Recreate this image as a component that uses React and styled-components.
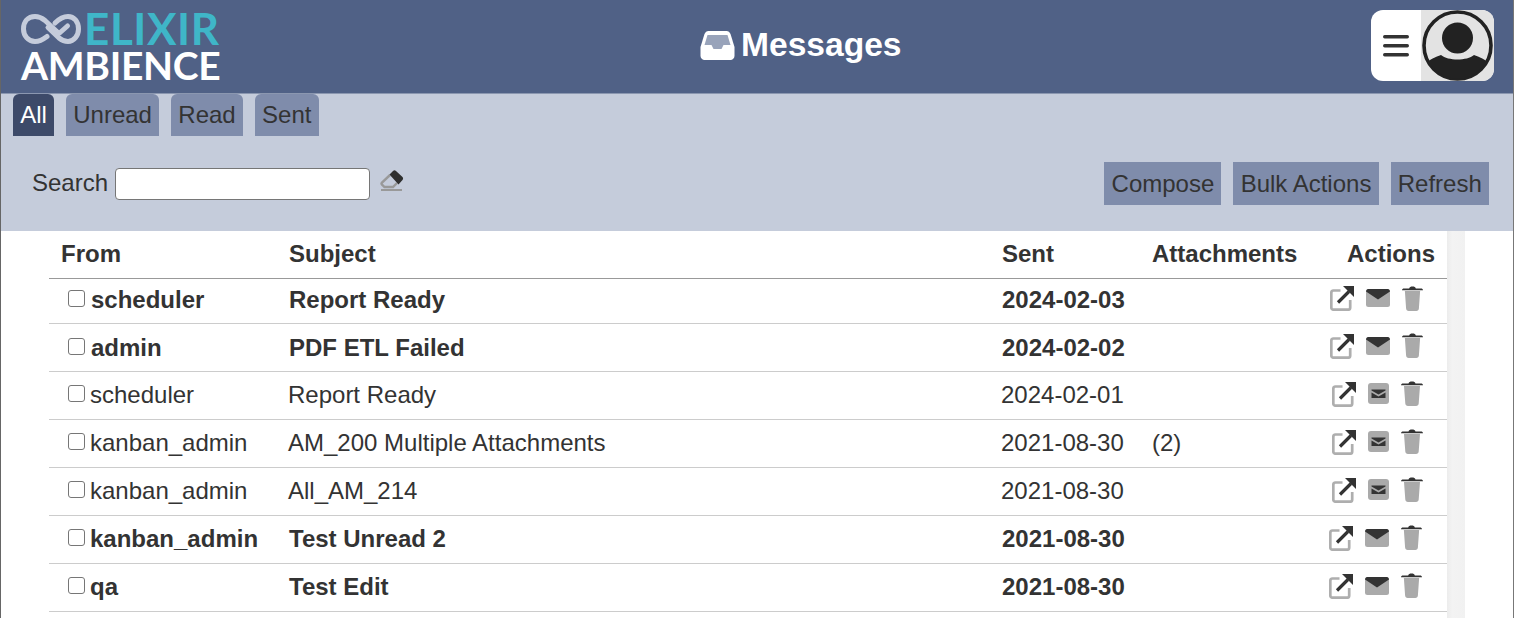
import React from "react";
import styled, { createGlobalStyle } from "styled-components";

const Global = createGlobalStyle`
  html, body { margin: 0; padding: 0; height: 618px; overflow: hidden; background: #fff; }
  body { font-family: "Liberation Sans", Arial, sans-serif; color: #333; font-size: 24px; }
`;
const Page = styled.div`
  width: 1514px; height: 618px; box-sizing: border-box; overflow: hidden;
  border-left: 1px solid #666; border-right: 1px solid #777; background: #fff;
`;
const Header = styled.header`
  height: 93px; margin-left: -1px; background: #506186; display: grid;
  grid-template-columns: 700px auto 1fr; align-items: center; border-bottom: 1px solid #8b97b0; box-sizing: content-box;
`;
const Logo = styled.div`
  align-self: start; padding: 12px 0 0 21px; display: flex; flex-direction: column; font-family: Lato, sans-serif; font-weight: 700;
`;
const LogoTop = styled.div`display: flex; align-items: center; height: 33px;`;
const LogoElixir = styled.span`color: #3fb6c8; font-size: 44px; line-height: 33px; letter-spacing: 0.6px; margin-left: 3px;`;
const LogoAmbience = styled.span`color: #fff; font-size: 39px; line-height: 36px; letter-spacing: -0.3px; margin-top: 2px;`;
const Title = styled.h1`
  margin: -3px 0 0; display: flex; align-items: center; gap: 6px; color: #fff; font-size: 33.6px; font-weight: 700; white-space: nowrap;
`;
const UserWrap = styled.div`display: flex; justify-content: flex-end; padding-right: 19px;`;
const UserBox = styled.div`
  width: 123px; height: 71px; border-radius: 12px; overflow: hidden; display: flex; background: #fff; margin-top: -2px;
`;
const Burger = styled.div`width: 50px; display: flex; align-items: center; justify-content: center;`;
const Avatar = styled.div`flex: 1; background: #e3e3e3; display: flex; align-items: center; justify-content: center;`;

const Toolbar = styled.section`background: #c5ccdb; height: 137px; display: flex; flex-direction: column;`;
const Tabs = styled.nav`display: flex; gap: 12px; padding-left: 12px;`;
const Tab = styled.div`
  height: 42px; line-height: 42px; padding: 0 7.2px; border-radius: 6px 6px 0 0;
  background: ${p => (p.$active ? "#3d4a69" : "#7f8cab")}; color: ${p => (p.$active ? "#fff" : "#333")};
`;
const ToolRow = styled.div`display: flex; justify-content: space-between; padding: 26px 24px 0 31px;`;
const SearchBox = styled.div`display: flex; align-items: flex-start; padding-top: 6px;`;
const SearchLabel = styled.label`line-height: 30px; margin-right: 7px;`;
const SearchInput = styled.input`
  width: 255px; height: 32px; box-sizing: border-box; border: 1px solid #767676; border-radius: 4px; background: #fff; padding: 0;
`;
const Eraser = styled.span`margin-left: 10px; margin-top: 1px; display: block;`;
const Buttons = styled.div`display: flex; gap: 12px;`;
const Button = styled.div`height: 43px; line-height: 43px; padding: 0 7.2px; background: #7f8cab; color: #333;`;

const Main = styled.main`display: flex; padding-left: 48px;`;
const TableWrap = styled.div`width: 1398px;`;
const Track = styled.div`width: 18px; height: 400px; background: linear-gradient(90deg, #ececec, #f3f3f3 30%, #f1f1f1);`;
const Cols = "228px 713px 150px 1fr";
const HeadRow = styled.div`
  display: grid; grid-template-columns: ${Cols}; height: 48px; line-height: 46px; font-weight: 700; border-bottom: 1px solid #999; padding-left: 12px; box-sizing: border-box;
`;
const HeadActions = styled.div`display: flex; justify-content: space-between; padding-right: 12px;`;
const Row = styled.div`
  display: grid; grid-template-columns: ${Cols}; height: ${p => (p.$first ? 45 : 48)}px; box-sizing: border-box; border-bottom: 1px solid #ccc; align-items: center;
  padding-left: ${p => (p.$unread ? 12 : 11)}px; padding-bottom: ${p => p.$pb}px; font-weight: ${p => (p.$unread ? 700 : 400)};
`;
const FromCell = styled.div`display: flex; align-items: center;`;
const Check = styled.span`
  width: 17px; height: 17px; box-sizing: border-box; border: 1px solid #767676; border-radius: 3px; background: #fff;
  margin: ${p => p.$mt}px ${p => p.$gap}px 0 ${p => (p.$unread ? 7 : 8)}px; display: block;
`;
const Attach = styled.div`display: flex; justify-content: space-between; padding: 0 12px 0 1px;`;
const Actions = styled.div`display: flex; align-items: center; gap: 12px; margin-top: ${p => p.$mt}px; padding-right: ${p => p.$pr}px;`;

const LogoMark = () => (
  <svg width="60" height="32" viewBox="0 0 60 31" fill="none" stroke="#c5ccdb" strokeWidth="5" strokeLinecap="round" strokeLinejoin="round">
    <path d="M26 23 C22 26 19 28 14 28 C7 28 2.5 22 2.5 15.5 C2.5 8 7 3 14 3 C18 3 21 4.5 24 7 L38 20 L46.5 12.5" />
    <path d="M27 14 L38 24.5 C41 27 44 28 47 28 C53 28 57.5 22 57.5 15.5 C57.5 8 53 3 47 3 C42 3 38 5.5 34 9.5" />
  </svg>
);
const Inbox = () => (
  <svg width="35" height="30" viewBox="0 0 34 30">
    <path d="M8 1 H26 C28 1 29 2 30 4 L34 17 V26 C34 28 32 30 30 30 H4 C2 30 0 28 0 26 V17 L4 4 C5 2 6 1 8 1 Z" fill="#fff" />
    <path d="M7 5 H27 L30 15 H23 L21 19 H13 L11 15 H4 Z" fill="#98a3ba" />
  </svg>
);
const BurgerIcon = () => (
  <svg width="26" height="24" viewBox="0 0 26 24" fill="#333">
    <rect y="1" width="26" height="3.4" rx="1.7" /><rect y="10" width="26" height="3.4" rx="1.7" /><rect y="19" width="26" height="3.4" rx="1.7" />
  </svg>
);
const AvatarIcon = () => (
  <svg width="73" height="71" viewBox="0 0 73 71">
    <defs><clipPath id="av"><circle cx="36.5" cy="35.5" r="33" /></clipPath></defs>
    <circle cx="36.5" cy="35.5" r="33.5" fill="none" stroke="#222" strokeWidth="3.6" />
    <circle cx="36.5" cy="28" r="15.5" fill="#222" />
    <path d="M0 71 V60 C6 50 14 47 20 45 C27 51 46 51 53 45 C59 47 67 50 73 60 V71 Z" fill="#222" clipPath="url(#av)" />
  </svg>
);
const EraserIcon = () => (
  <svg width="24" height="23" viewBox="0 0 24 23">
    <path d="M10 6 L2 13.5 C1.4 14.2 1.4 15 2 15.6 L4.5 18 H13 L17 14" fill="none" stroke="#999" strokeWidth="2.4" />
    <path d="M9.5 5.5 L13 2 C14 1 15 1 16 2 L22.5 8 C23.3 9 23.3 10 22.5 11 L18.5 15.5 Z" fill="#2f2f2f" />
    <rect x="1" y="20" width="21" height="2" fill="#999" />
  </svg>
);
const ExtIcon = () => (
  <svg width="24" height="26" viewBox="0 0 24 26" fill="none">
    <path d="M10.5 5.5 H3.5 C2 5.5 1.3 6.5 1.3 8 V22.5 C1.3 24 2 24.7 3.5 24.7 H18 C19.5 24.7 20.2 24 20.2 22.5 V15" stroke="#aeaeae" strokeWidth="2.7" />
    <path d="M8 17.5 L19 6.5" stroke="#333" strokeWidth="3.2" />
    <path d="M13 1 H24 V12 Z" fill="#333" />
  </svg>
);
const EnvClosed = () => (
  <svg width="24" height="18" viewBox="0 0 24 18">
    <rect x="0" y="1" width="24" height="17" rx="2.5" fill="#aaa" />
    <path d="M2 0 H22 C23 0 24 1 24 2.5 L12 10.5 L0 2.5 C0 1 1 0 2 0 Z" fill="#333" />
  </svg>
);
const EnvOpen = () => (
  <svg width="21" height="21" viewBox="0 0 21 21">
    <rect width="21" height="21" rx="3" fill="#aaa" />
    <path d="M3.5 6.5 H17.5 V7.5 L10.5 11.5 L3.5 7.5 Z" fill="#333" />
    <path d="M3.5 9.5 L10.5 13.5 L17.5 9.5 V15 H3.5 Z" fill="#333" />
  </svg>
);
const Trash = ({ w }) => (
  <svg width={w} height="25" viewBox="0 0 22 25" preserveAspectRatio="none">
    <path d="M3 5 H19 L17.7 22.5 C17.6 24 16.6 25 15 25 H7 C5.4 25 4.4 24 4.3 22.5 Z" fill="#aaa" />
    <path d="M0 4.2 C0 3 1 2.5 2 2.5 H7.5 C8 1 9 0.5 11 0.5 C13 0.5 14 1 14.5 2.5 H20 C21 2.5 22 3 22 4.2 Z" fill="#333" />
  </svg>
);

const rows = [
  { from: "scheduler", subject: "Report Ready", sent: "2024-02-03", unread: true, first: true, pr: 12, gap: 6, pb: 2, checkMt: -4, actMt: -4 },
  { from: "admin", subject: "PDF ETL Failed", sent: "2024-02-02", unread: true, pr: 12, gap: 6, pb: 0, checkMt: -2, actMt: -4 },
  { from: "scheduler", subject: "Report Ready", sent: "2024-02-01", pr: 12, gap: 5, pb: 2, checkMt: -2, actMt: -2 },
  { from: "kanban_admin", subject: "AM_200 Multiple Attachments", sent: "2021-08-30", att: "(2)", pr: 12, gap: 5, pb: 2, checkMt: -2, actMt: -2 },
  { from: "kanban_admin", subject: "All_AM_214", sent: "2021-08-30", pr: 12, gap: 5, pb: 2, checkMt: -2, actMt: -2 },
  { from: "kanban_admin", subject: "Test Unread 2", sent: "2021-08-30", unread: true, pr: 13, gap: 5, pb: 2, checkMt: -2, actMt: -2 },
  { from: "qa", subject: "Test Edit", sent: "2021-08-30", unread: true, pr: 13, gap: 5, pb: 2, checkMt: -2, actMt: -2 },
];

export default function App() {
  return (
    <Page>
      <Global />
      <Header>
        <Logo>
          <LogoTop><LogoMark /><LogoElixir>ELIXIR</LogoElixir></LogoTop>
          <LogoAmbience>AMBIENCE</LogoAmbience>
        </Logo>
        <Title><Inbox />Messages</Title>
        <UserWrap>
          <UserBox>
            <Burger><BurgerIcon /></Burger>
            <Avatar><AvatarIcon /></Avatar>
          </UserBox>
        </UserWrap>
      </Header>
      <Toolbar>
        <Tabs>
          <Tab $active>All</Tab><Tab>Unread</Tab><Tab>Read</Tab><Tab>Sent</Tab>
        </Tabs>
        <ToolRow>
          <SearchBox>
            <SearchLabel>Search</SearchLabel>
            <SearchInput />
            <Eraser><EraserIcon /></Eraser>
          </SearchBox>
          <Buttons>
            <Button>Compose</Button><Button>Bulk Actions</Button><Button>Refresh</Button>
          </Buttons>
        </ToolRow>
      </Toolbar>
      <Main>
        <TableWrap>
          <HeadRow>
            <div>From</div><div>Subject</div><div>Sent</div>
            <HeadActions><span>Attachments</span><span>Actions</span></HeadActions>
          </HeadRow>
          {rows.map((r, i) => (
            <Row key={i} $unread={r.unread} $first={r.first} $pb={r.pb}>
              <FromCell><Check $unread={r.unread} $gap={r.gap} $mt={r.checkMt} />{r.from}</FromCell>
              <div>{r.subject}</div>
              <div>{r.sent}</div>
              <Attach>
                <span>{r.att}</span>
                <Actions $pr={r.pr} $mt={r.actMt}>
                  <ExtIcon />
                  {r.unread ? <EnvClosed /> : <EnvOpen />}
                  <Trash w={r.unread ? 21 : 22} />
                </Actions>
              </Attach>
            </Row>
          ))}
        </TableWrap>
        <Track />
      </Main>
    </Page>
  );
}
